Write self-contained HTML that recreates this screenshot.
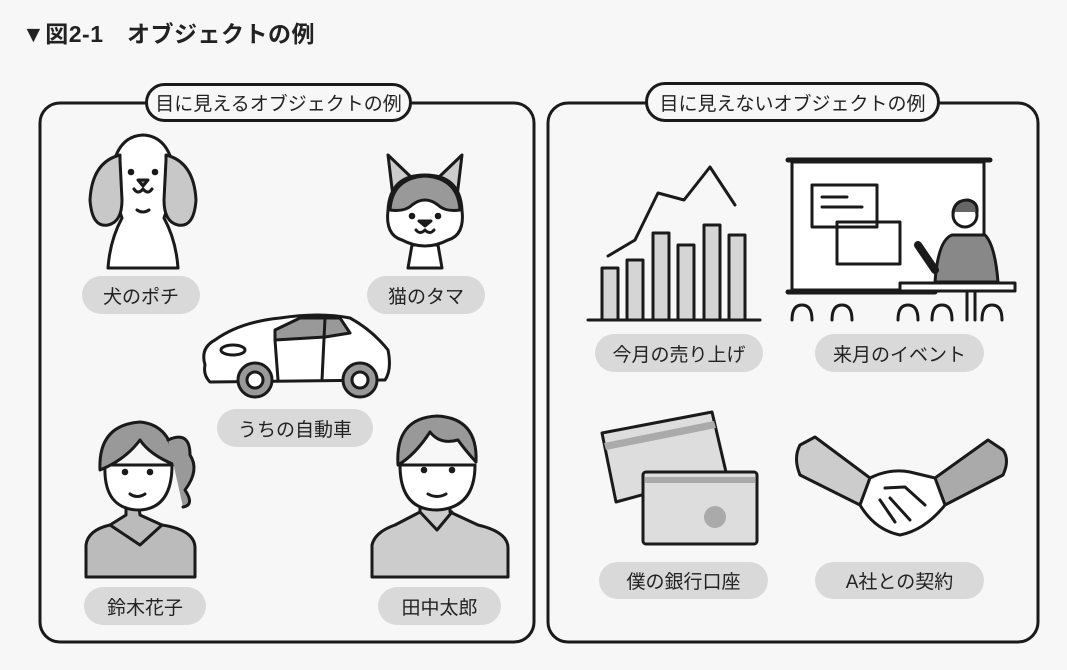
<!DOCTYPE html>
<html><head><meta charset="utf-8"><style>
html,body{margin:0;padding:0;background:#f7f7f7;}
body{width:1067px;height:670px;position:relative;overflow:hidden;font-family:"Liberation Sans","Noto Sans CJK JP",sans-serif;}
.t{position:absolute;left:22px;top:15px;font-size:23px;font-weight:bold;color:#222;letter-spacing:0.5px;}
.p{position:absolute;background:#d9d9d9;border-radius:20px;font-size:19px;color:#222;display:flex;align-items:center;justify-content:center;}
.h{position:absolute;border:3px solid #1a1a1a;border-radius:22px;background:#f7f7f7;font-size:19px;color:#222;display:flex;align-items:center;justify-content:center;box-sizing:border-box;}
svg{position:absolute;left:0;top:0;}
</style></head><body>
<div class="t">▼図2-1　オブジェクトの例</div>
<svg width="1067" height="670" viewBox="0 0 1067 670" fill="none" stroke="#1a1a1a" stroke-width="3" stroke-linejoin="round" stroke-linecap="round">
<rect x="40" y="103" width="494" height="539" rx="20"/>
<rect x="548" y="103" width="490" height="539" rx="20"/>
<!-- dog -->
<path d="M108 268 Q110 240 122 218 Q112 190 112 170 Q118 136 143 135 Q168 136 174 170 Q174 190 164 218 Q176 240 178 268 Z" fill="#fff"/>
<path d="M120 155 Q92 162 90 200 Q92 228 108 225 Q122 222 122 200 L120 160 Z" fill="#c8c8c8"/>
<path d="M166 155 Q194 162 196 200 Q194 228 178 225 Q164 222 164 200 L166 160 Z" fill="#c8c8c8"/>
<circle cx="131" cy="172" r="1.8" fill="#1a1a1a"/><circle cx="155" cy="172" r="1.8" fill="#1a1a1a"/>
<path d="M138 180 L148 180 L143 186 Z" fill="#999"/>
<path d="M134 189 Q138 195 143 189 Q148 195 152 189"/><path d="M137 210 Q143 214 149 210"/>
<!-- cat -->
<path d="M408 268 L412 245 L438 245 L442 268 Z" fill="#fff"/>
<path d="M394 205 L388 155 L412 178 Z" fill="#ccc"/><path d="M456 205 L462 155 L438 178 Z" fill="#ccc"/>
<path d="M425 175 Q460 175 462 210 Q465 235 448 240 Q425 252 402 240 Q385 235 388 210 Q390 175 425 175 Z" fill="#fff"/>
<path d="M390 210 Q392 178 425 176 Q458 178 460 210 Q445 212 438 205 Q425 195 412 205 Q405 212 390 210 Z" fill="#999"/>
<circle cx="412" cy="216" r="1.8" fill="#1a1a1a"/><circle cx="438" cy="216" r="1.8" fill="#1a1a1a"/>
<path d="M419 221 L431 221 L425 226 Z" fill="#1a1a1a"/><path d="M416 230 Q420 235 425 230 Q430 235 434 230"/>
<!-- car -->
<path d="M205 365 Q200 348 215 340 Q240 322 280 318 Q320 312 350 318 Q372 330 388 350 Q392 370 385 380 L210 382 Q203 375 205 365 Z" fill="#fff"/>
<path d="M275 330 L300 318 L340 318 L350 333 L325 337 L275 340 Z" fill="#999"/>
<line x1="325" y1="318" x2="322" y2="380"/><line x1="275" y1="340" x2="278" y2="380"/>
<circle cx="255" cy="380" r="17" fill="#999"/><circle cx="255" cy="380" r="8" fill="#fff"/>
<circle cx="360" cy="380" r="17" fill="#999"/><circle cx="360" cy="380" r="8" fill="#fff"/>
<ellipse cx="233" cy="350" rx="12" ry="5"/>
<!-- woman -->
<path d="M86 577 L86 545 Q88 530 110 525 L126 515 L126 500 L138 500 L140 515 L162 525 Q195 530 195 548 L195 577 Z" fill="#bbb"/>
<path d="M110 525 L140 545 L162 525"/>
<path d="M105 465 Q103 510 140 510 Q172 508 172 465 Z" fill="#fff"/>
<path d="M100 470 Q98 425 140 422 Q172 425 175 465 Q150 455 140 440 Q125 460 100 470 Z" fill="#999"/>
<path d="M168 440 Q190 430 190 455 Q200 470 185 490 Q195 505 183 507" fill="#999"/>
<circle cx="125" cy="472" r="1.8" fill="#1a1a1a"/><circle cx="150" cy="472" r="1.8" fill="#1a1a1a"/><path d="M130 494 Q137 499 145 494"/>
<!-- man -->
<path d="M372 577 L372 545 Q375 532 395 525 L420 512 L420 498 L450 498 L450 512 L478 525 Q508 532 508 548 L508 577 Z" fill="#ccc"/>
<path d="M420 512 L437 530 L452 512"/>
<path d="M400 465 Q400 510 437 510 Q475 508 475 465 Z" fill="#fff"/>
<path d="M398 465 Q395 418 437 416 Q478 418 476 462 Q465 450 458 440 Q440 445 430 432 Q415 455 398 465 Z" fill="#999"/>
<circle cx="424" cy="470" r="1.8" fill="#1a1a1a"/><circle cx="452" cy="470" r="1.8" fill="#1a1a1a"/><path d="M428 494 Q437 499 446 494"/>
<!-- chart -->
<g fill="#d5d5d5"><rect x="602" y="268" width="16" height="52"/><rect x="627" y="260" width="16" height="60"/><rect x="653" y="233" width="16" height="87"/><rect x="678" y="245" width="16" height="75"/><rect x="704" y="225" width="16" height="95"/><rect x="729" y="235" width="16" height="85"/></g>
<line x1="588" y1="320" x2="760" y2="320"/>
<polyline points="608,256 635,240 658,193 684,200 710,167 735,205" fill="none"/>
<!-- presentation -->
<line x1="788" y1="160" x2="990" y2="160" stroke-width="5"/>
<rect x="792" y="162" width="192" height="128" fill="#fff"/>
<line x1="788" y1="292" x2="935" y2="292" stroke-width="5"/>
<rect x="812" y="185" width="65" height="42" fill="#fff"/><rect x="837" y="222" width="63" height="42" fill="none"/>
<line x1="822" y1="197" x2="847" y2="197"/><line x1="822" y1="207" x2="862" y2="207"/>
<path d="M935 282 Q938 240 952 235 L985 235 Q995 245 998 282 Z" fill="#888"/>
<circle cx="965" cy="215" r="12" fill="#fff"/><path d="M953 212 Q955 200 968 200 Q978 202 977 212" fill="#666"/>
<path d="M935 270 L918 245" stroke-width="8"/>
<rect x="900" y="283" width="115" height="8" fill="#fff"/>
<path d="M792 320 Q792 305 802 305 Q812 305 812 320 M832 320 Q832 305 842 305 Q852 305 852 320 M898 320 Q898 305 908 305 Q918 305 918 320 M932 320 Q932 305 942 305 Q952 305 952 320 M982 320 Q982 305 992 305 Q1002 305 1002 320"/>
<line x1="967" y1="291" x2="967" y2="320"/><line x1="975" y1="291" x2="975" y2="320"/>
<!-- cards -->
<path d="M602 433 L712 412 L726 472 L616 502 Z" fill="#ddd"/>
<path d="M604 443 L714 421 L716 428 L606 450 Z" fill="#aaa" stroke="none"/>
<rect x="643" y="472" width="114" height="72" rx="3" fill="#ddd"/>
<rect x="645" y="477" width="110" height="6" fill="#aaa" stroke="none"/>
<circle cx="715" cy="517" r="11" fill="#aaa" stroke="none"/>
<!-- handshake -->
<path d="M800 445 Q793 458 800 475 L860 505 L870 478 L815 437 Z" fill="#ccc"/>
<path d="M1003 450 Q1010 460 1003 475 L945 505 L935 478 L988 440 Z" fill="#aaa"/>
<path d="M870 478 Q890 468 910 472 L935 478 L945 505 Q925 530 900 535 Q875 530 860 505 Z" fill="#fff"/>
<path d="M885 488 L905 487 L925 505 M880 500 L895 522 M890 498 L910 520"/>
</svg>
<div class="h" style="left:145px;top:83px;width:267px;height:39px;">目に見えるオブジェクトの例</div>
<div class="h" style="left:645px;top:82px;width:295px;height:40px;">目に見えないオブジェクトの例</div>
<div class="p" style="left:82px;top:276px;width:118px;height:38px;">犬のポチ</div>
<div class="p" style="left:367px;top:276px;width:118px;height:38px;">猫のタマ</div>
<div class="p" style="left:217px;top:409px;width:156px;height:38px;">うちの自動車</div>
<div class="p" style="left:84px;top:587px;width:122px;height:38px;">鈴木花子</div>
<div class="p" style="left:378px;top:587px;width:123px;height:38px;">田中太郎</div>
<div class="p" style="left:595px;top:334px;width:168px;height:38px;">今月の売り上げ</div>
<div class="p" style="left:815px;top:334px;width:169px;height:38px;">来月のイベント</div>
<div class="p" style="left:599px;top:562px;width:169px;height:37px;">僕の銀行口座</div>
<div class="p" style="left:815px;top:562px;width:169px;height:37px;">A社との契約</div>
</body></html>
